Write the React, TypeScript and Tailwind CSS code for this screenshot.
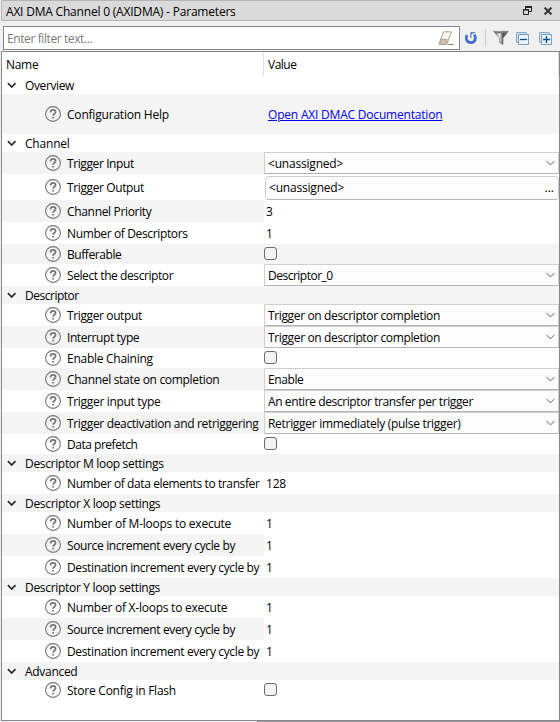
import React from "react";

type Kind = "group" | "combo" | "picker" | "value" | "check" | "link";

interface RowData {
  kind: Kind;
  label: string;
  value?: string;
  height: string;
  shaded?: boolean;
  track?: string;
  valueTrack?: string;
}

const H18 = "h-[18px]";
const H20 = "h-[20px]";
const H22 = "h-[22px]";

const rows: RowData[] = [
  { kind: "group", label: "Overview", height: H18, track: "tracking-[-0.38px]" },
  { kind: "link", label: "Configuration Help", value: "Open AXI DMAC Documentation", height: "h-[40px]", shaded: true },
  { kind: "group", label: "Channel", height: H18 },
  { kind: "combo", label: "Trigger Input", value: "<unassigned>", height: H22, shaded: true, track: "tracking-[-0.4px]" },
  { kind: "picker", label: "Trigger Output", value: "<unassigned>", height: "h-[26px]", track: "tracking-[-0.38px]" },
  { kind: "value", label: "Channel Priority", value: "3", height: H22, shaded: true, track: "tracking-[-0.33px]" },
  { kind: "value", label: "Number of Descriptors", value: "1", height: H22, track: "tracking-[-0.37px]" },
  { kind: "check", label: "Bufferable", height: H20, shaded: true, track: "tracking-[-0.43px]" },
  { kind: "combo", label: "Select the descriptor", value: "Descriptor_0", height: H22, track: "tracking-[-0.42px]", valueTrack: "tracking-[-0.5px]" },
  { kind: "group", label: "Descriptor", height: H18, shaded: true, track: "tracking-[-0.48px]" },
  { kind: "combo", label: "Trigger output", value: "Trigger on descriptor completion", height: H22, track: "tracking-[-0.38px]", valueTrack: "tracking-[-0.36px]" },
  { kind: "combo", label: "Interrupt type", value: "Trigger on descriptor completion", height: H22, shaded: true, track: "tracking-[-0.42px]", valueTrack: "tracking-[-0.36px]" },
  { kind: "check", label: "Enable Chaining", height: H20, track: "tracking-[-0.27px]" },
  { kind: "combo", label: "Channel state on completion", value: "Enable", height: H22, shaded: true, track: "tracking-[-0.31px]", valueTrack: "tracking-[-0.4px]" },
  { kind: "combo", label: "Trigger input type", value: "An entire descriptor transfer per trigger", height: H22, track: "tracking-[-0.32px]", valueTrack: "tracking-[-0.4px]" },
  { kind: "combo", label: "Trigger deactivation and retriggering", value: "Retrigger immediately (pulse trigger)", height: H22, shaded: true, track: "tracking-[-0.33px]", valueTrack: "tracking-[-0.3px]" },
  { kind: "check", label: "Data prefetch", height: H20, track: "tracking-[-0.48px]" },
  { kind: "group", label: "Descriptor M loop settings", height: H18, shaded: true, track: "tracking-[-0.33px]" },
  { kind: "value", label: "Number of data elements to transfer", value: "128", height: H22, track: "tracking-[-0.39px]" },
  { kind: "group", label: "Descriptor X loop settings", height: H18, shaded: true, track: "tracking-[-0.31px]" },
  { kind: "value", label: "Number of M-loops to execute", value: "1", height: H22, track: "tracking-[-0.24px]" },
  { kind: "value", label: "Source increment every cycle by", value: "1", height: H22, shaded: true, track: "tracking-[-0.36px]" },
  { kind: "value", label: "Destination increment every cycle by", value: "1", height: H22, track: "tracking-[-0.36px]" },
  { kind: "group", label: "Descriptor Y loop settings", height: H18, shaded: true, track: "tracking-[-0.31px]" },
  { kind: "value", label: "Number of X-loops to execute", value: "1", height: H22, track: "tracking-[-0.24px]" },
  { kind: "value", label: "Source increment every cycle by", value: "1", height: H22, shaded: true, track: "tracking-[-0.36px]" },
  { kind: "value", label: "Destination increment every cycle by", value: "1", height: H22, track: "tracking-[-0.36px]" },
  { kind: "group", label: "Advanced", height: H18, shaded: true, track: "tracking-[-0.3px]" },
  { kind: "check", label: "Store Config in Flash", height: H20, track: "tracking-[-0.25px]" },
];

function HelpIcon() {
  return (
    <svg width="16" height="16" viewBox="0 0 16 16" fill="none" className="shrink-0">
      <circle cx="8" cy="8" r="7.4" stroke="#757575" strokeWidth="1.1" />
      <path d="M5.5 6.4C5.5 4.6 6.5 3.9 8 3.9s2.6.8 2.6 2.1c0 1.8-2.5 1.8-2.5 3.8" stroke="#757575" strokeWidth="1.7" />
      <path d="M7.2 10.9h1.8v1.7H7.2z" fill="#757575" />
    </svg>
  );
}

function GroupChevron() {
  return (
    <svg width="10" height="7" viewBox="0 0 10 7" fill="none" className="shrink-0">
      <path d="M.9 1.2 4.7 5l3.8-3.8" stroke="#2b2b2b" strokeWidth="1.7" />
    </svg>
  );
}

function ComboChevron() {
  return (
    <svg width="9" height="6" viewBox="0 0 9 6" fill="none" className="shrink-0">
      <path d="M.5.9 4.5 4.9l4-4" stroke="#5c5c5c" strokeWidth="1" />
    </svg>
  );
}

function ValueCell({ row }: { row: RowData }) {
  const track = row.valueTrack ?? "";
  switch (row.kind) {
    case "combo":
      return (
        <div className="flex h-full flex-1 items-center justify-between rounded-[1px] border border-[#cfcfcf] border-b-[#b5b5b5] bg-[#fdfdfd] pr-[3px] pl-[3px]">
          <span className={`pt-px ${track}`}>{row.value}</span>
          <ComboChevron />
        </div>
      );
    case "picker":
      return (
        <div className="flex h-full flex-1 items-center pt-px pl-px">
          <div className="flex h-6 flex-1 items-center justify-between rounded-[4px] border border-[#cfcfcf] border-b-[#b5b5b5] bg-[#fdfdfd] pr-[4px] pl-[3px]">
            <span className="pt-px">{row.value}</span>
            <span className="pt-px tracking-normal">...</span>
          </div>
        </div>
      );
    case "value":
      return <div className="flex h-full flex-1 items-center bg-white pt-px pl-[2px]">{row.value}</div>;
    case "check":
      return <div className="mb-px size-[13px] rounded-[3px] border border-[#6a6a6a] bg-[#f3f3f3]" />;
    case "link":
      return <span className="pt-px pl-1 text-[#0000ee] underline underline-offset-[1px]">{row.value}</span>;
    default:
      return null;
  }
}

function Row({ row }: { row: RowData }) {
  const bg = row.shaded ? "bg-[#f4f4f4]" : "bg-white";
  const track = row.track ?? "";
  if (row.kind === "group") {
    return (
      <div className={`flex shrink-0 items-center pl-[5px] ${row.height} ${bg}`}>
        <GroupChevron />
        <span className={`pt-[2px] pl-2 ${track}`}>{row.label}</span>
      </div>
    );
  }
  return (
    <div className={`flex shrink-0 items-center ${row.height} ${bg}`}>
      <div className="flex w-[262px] shrink-0 items-center gap-[6px] pl-[43px]">
        <HelpIcon />
        <span className={`pt-px ${track}`}>{row.label}</span>
      </div>
      <ValueCell row={row} />
    </div>
  );
}

function TitleBar() {
  return (
    <div className="ml-px flex h-[21px] shrink-0 items-center border border-r-0 border-[#b5b5b5] bg-[#dadada] pr-[8px] pl-1">
      <span className="flex-1 pt-[3px]">AXI DMA Channel 0 (AXIDMA) - Parameters</span>
      <svg width="9" height="9" viewBox="0 0 9 9" fill="none" className="mr-[12px] shrink-0">
        <path d="M2.5 3V.5h6v5H6" stroke="#222" />
        <path d="M2 1h7" stroke="#222" strokeWidth="2" />
        <path d="M.5 3.5h5v5h-5zM0 4h6" stroke="#222" fill="#dadada" />
      </svg>
      <svg width="8" height="8" viewBox="0 0 8 8" className="shrink-0">
        <path d="m.6.6 6.8 6.8m0-6.8L.6 7.4" stroke="#333" strokeWidth="2" />
      </svg>
    </div>
  );
}

function SquareButton({ plus }: { plus?: boolean }) {
  return (
    <svg width="13" height="13" viewBox="0 0 13 13" fill="none" className="shrink-0">
      <path d="M.5 10.5V.5h10" stroke="#86a7c5" />
      <path d="M1 10.5h2M10.5 1v2" stroke="#86a7c5" />
      <path d="M1 1h9v2H3v7H1z" fill="#cfe3f3" />
      <path d="M2.5 2.5h10v10h-10z" fill="#e9f7ff" stroke="#7c9dbd" />
      <path d={plus ? "M4 7.5h7M7.5 4v7" : "M4 7.5h7"} stroke="#0b4a8f" strokeWidth="1.3" />
    </svg>
  );
}

function Toolbar() {
  return (
    <div className="flex h-[30px] shrink-0 items-center pt-1 pl-[3px]">
      <div className="flex h-6 w-[457px] shrink-0 items-center justify-between border border-[#82868c] bg-white pr-[5px] pl-[3px]">
        <span className="pt-px tracking-[-0.4px] text-[#7a7a7a]">Enter filter text...</span>
        <svg width="16" height="15" viewBox="0 0 16 15" fill="none">
          <path d="M6.2.8h6.4q1 0 .6 1L9 12.5q-.4 1-1.4 1H2q-1 0-.7-1L5 1.800q.3-1 1.200-1z" fill="#f8f4ee" stroke="#a6957d" strokeWidth=".9" />
          <path d="M2.900 8.300h6.200L7.600 13.500H1.500z" fill="#cdbfae" stroke="#a6957d" strokeWidth=".7" />
          <path d="M9.500 13.500h6" stroke="#8c795c" />
        </svg>
      </div>
      <svg width="14" height="14" viewBox="0 0 14 14" fill="none" className="ml-1 shrink-0">
        <path d="M2.9 4C1.400 7.500 2.600 11.600 6.900 11.600c4.600 0 5.600-4.600 3.400-8" stroke="#3d70d0" strokeWidth="2.700" />
        <path d="M6.600 1.200h5.600L7.400 3v3.800H6.300z" fill="#2f61c4" />
      </svg>
      <div className="ml-[7px] h-[18px] w-px bg-[#cfcfcf]" />
      <svg width="16" height="16" viewBox="0 0 16 16" className="ml-[7px] shrink-0">
        <defs>
          <linearGradient id="funnel" x1="0" x2="1" y1="0" y2="0">
            <stop offset="0" stopColor="#555" />
            <stop offset=".4" stopColor="#eee" />
            <stop offset=".65" stopColor="#444" />
            <stop offset="1" stopColor="#888" />
          </linearGradient>
        </defs>
        <path d="M.6 1.400h14.800L10 8v6.500L6.400 12.500V8z" fill="url(#funnel)" stroke="#777" strokeWidth=".7" />
        <path d="M1.500 1.800h13l-1.400 1.400H3z" fill="#777" />
      </svg>
      <div className="ml-[7px] flex gap-[10px] pt-px">
        <SquareButton />
        <SquareButton plus />
      </div>
    </div>
  );
}

export default function App() {
  return (
    <div className="flex h-[722px] w-[560px] flex-col overflow-hidden bg-[#f0f0f0] font-['Open_Sans','Noto_Sans',sans-serif] text-[12px] leading-4 tracking-[-0.2px] whitespace-nowrap text-black">
      <TitleBar />
      <Toolbar />
      <div className="ml-px flex h-[670px] shrink-0 flex-col border border-[#828790] bg-white">
        <div className="flex h-6 shrink-0 items-stretch">
          <div className="w-[262px] border-r border-[#e0e0e0] pt-[5px] pl-1 tracking-[-0.3px]">Name</div>
          <div className="flex-1 border-r border-[#e0e0e0] pt-[5px] pl-1 tracking-[-0.5px]">Value</div>
        </div>
        {rows.map((row, i) => (
          <Row key={i} row={row} />
        ))}
      </div>
      <div className="ml-[257px] h-px shrink-0 bg-[#a0a0a0]" />
    </div>
  );
}
